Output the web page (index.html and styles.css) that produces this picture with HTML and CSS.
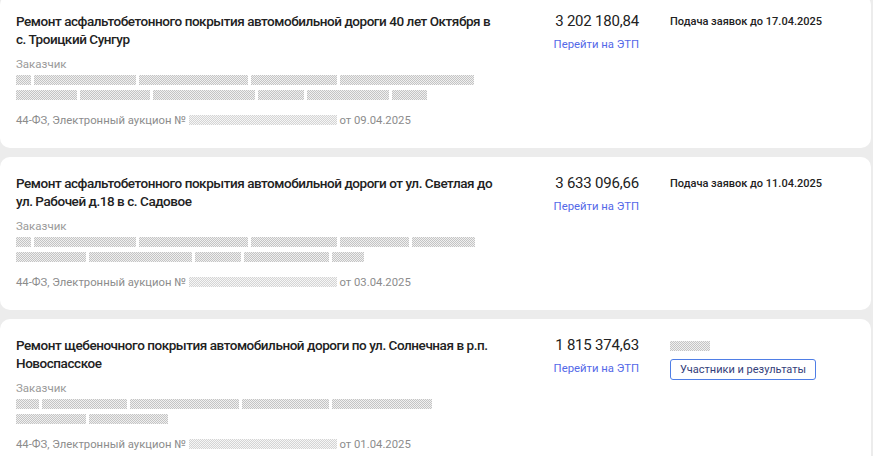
FILE: index.html
```html
<!DOCTYPE html>
<html>
<head>
  <meta charset="UTF-8">
  <title>Закупки</title>
  <link rel="stylesheet" href="styles.css">
</head>
<body>
<div class="list">

  <div class="card">
    <div class="info">
      <div class="title">Ремонт асфальтобетонного покрытия автомобильной дороги 40 лет Октября в с. Троицкий Сунгур</div>
      <div class="label">Заказчик</div>
      <div class="hidden-text">
        <span class="blur" style="width: 15px;"></span><span class="blur" style="width: 102px;"></span><span class="blur" style="width: 109px;"></span><span class="blur" style="width: 86px;"></span><span class="blur" style="width: 134px;"></span><br>
        <span class="blur" style="width: 61px;"></span><span class="blur" style="width: 70px;"></span><span class="blur" style="width: 102px;"></span><span class="blur" style="width: 46px;"></span><span class="blur" style="width: 82px;"></span><span class="blur" style="width: 35px;"></span>
      </div>
      <div class="meta">44-ФЗ, Электронный аукцион №&nbsp;<span class="blur num"></span> от 09.04.2025</div>
    </div>
    <div class="price">
      <div class="sum">3 202 180,84</div>
      <a class="etp" href="#">Перейти на ЭТП</a>
    </div>
    <div class="status">
      <div class="deadline">Подача заявок до 17.04.2025</div>
    </div>
  </div>

  <div class="card">
    <div class="info">
      <div class="title">Ремонт асфальтобетонного покрытия автомобильной дороги от ул. Светлая до ул. Рабочей д.18 в с. Садовое</div>
      <div class="label">Заказчик</div>
      <div class="hidden-text">
        <span class="blur" style="width: 15px;"></span><span class="blur" style="width: 102px;"></span><span class="blur" style="width: 109px;"></span><span class="blur" style="width: 86px;"></span><span class="blur" style="width: 69px;"></span><span class="blur" style="width: 63px;"></span><br>
        <span class="blur" style="width: 70px;"></span><span class="blur" style="width: 103px;"></span><span class="blur" style="width: 46px;"></span><span class="blur" style="width: 85px;"></span><span class="blur" style="width: 32px;"></span>
      </div>
      <div class="meta">44-ФЗ, Электронный аукцион №&nbsp;<span class="blur num"></span> от 03.04.2025</div>
    </div>
    <div class="price">
      <div class="sum">3 633 096,66</div>
      <a class="etp" href="#">Перейти на ЭТП</a>
    </div>
    <div class="status">
      <div class="deadline">Подача заявок до 11.04.2025</div>
    </div>
  </div>

  <div class="card">
    <div class="info">
      <div class="title">Ремонт щебеночного покрытия автомобильной дороги по ул. Солнечная в р.п. Новоспасское</div>
      <div class="label">Заказчик</div>
      <div class="hidden-text">
        <span class="blur" style="width: 23px;"></span><span class="blur" style="width: 85px;"></span><span class="blur" style="width: 109px;"></span><span class="blur" style="width: 87px;"></span><span class="blur" style="width: 100px;"></span><br>
        <span class="blur" style="width: 70px;"></span><span class="blur" style="width: 79px;"></span>
      </div>
      <div class="meta">44-ФЗ, Электронный аукцион №&nbsp;<span class="blur num"></span> от 01.04.2025</div>
    </div>
    <div class="price">
      <div class="sum">1 815 374,63</div>
      <a class="etp" href="#">Перейти на ЭТП</a>
    </div>
    <div class="status">
      <div class="hidden-status"><span class="blur" style="width: 40px;"></span></div>
      <a class="results" href="#">Участники и результаты</a>
    </div>
  </div>

</div>
</body>
</html>
```

FILE: styles.css
```css
body {
  margin: 0;
  padding: 0;
  background: #ececec;
  font-family: "Roboto", "Noto Sans", sans-serif;
  color: #222;
}
.list {
  display: flex;
  flex-direction: column;
  gap: 9px;
  margin-top: -5px;
  padding-right: 2px;
}
.card {
  display: flex;
  background: #fff;
  border-radius: 10px;
  padding: 17px 16px 19px 16px;
}
.info {
  width: 490px;
  padding-right: 14px;
}
.title {
  width: 484px;
  font-size: 13.5px;
  font-weight: 500;
  letter-spacing: -0.45px;
  line-height: 18px;
  color: #222;
}
.label {
  margin-top: 8px;
  font-size: 11.5px;
  line-height: 16px;
  color: #9a9a9a;
}
.hidden-text {
  font-size: 0;
  line-height: 15px;
  padding-top: 1px;
}
.blur {
  display: inline-block;
  height: 10px;
  margin-right: 3px;
  vertical-align: middle;
  background: repeating-conic-gradient(#c4c4c4 0 25%, #f0f0f0 0 50%) 0 0 / 2px 2px;
}
.meta {
  margin-top: 10px;
  font-size: 11.3px;
  line-height: 16px;
  color: #8c8c8c;
}
.meta .num {
  width: 148px;
  margin-right: 0;
  vertical-align: -1px;
  background: repeating-conic-gradient(#d4d4d4 0 25%, #f6f6f6 0 50%) 0 0 / 2px 2px;
}
.price {
  width: 119px;
  display: flex;
  flex-direction: column;
  align-items: flex-end;
}
.sum {
  font-size: 15px;
  letter-spacing: -0.2px;
  line-height: 18px;
  color: #222;
}
.etp {
  margin-top: 8px;
  font-size: 11.3px;
  line-height: 14px;
  color: #5468e8;
  text-decoration: none;
}
.status {
  margin-left: 31px;
  padding-top: 2px;
}
.deadline {
  font-size: 11px;
  font-weight: 500;
  line-height: 16px;
  color: #222;
}
.hidden-status {
  font-size: 0;
  line-height: 16px;
}
.results {
  display: inline-block;
  margin-top: 5px;
  padding: 0 9px;
  height: 21px;
  line-height: 19px;
  box-sizing: border-box;
  border: 1px solid #4f7ee6;
  border-radius: 3px;
  font-size: 11px;
  color: #34407a;
  text-decoration: none;
}
```
